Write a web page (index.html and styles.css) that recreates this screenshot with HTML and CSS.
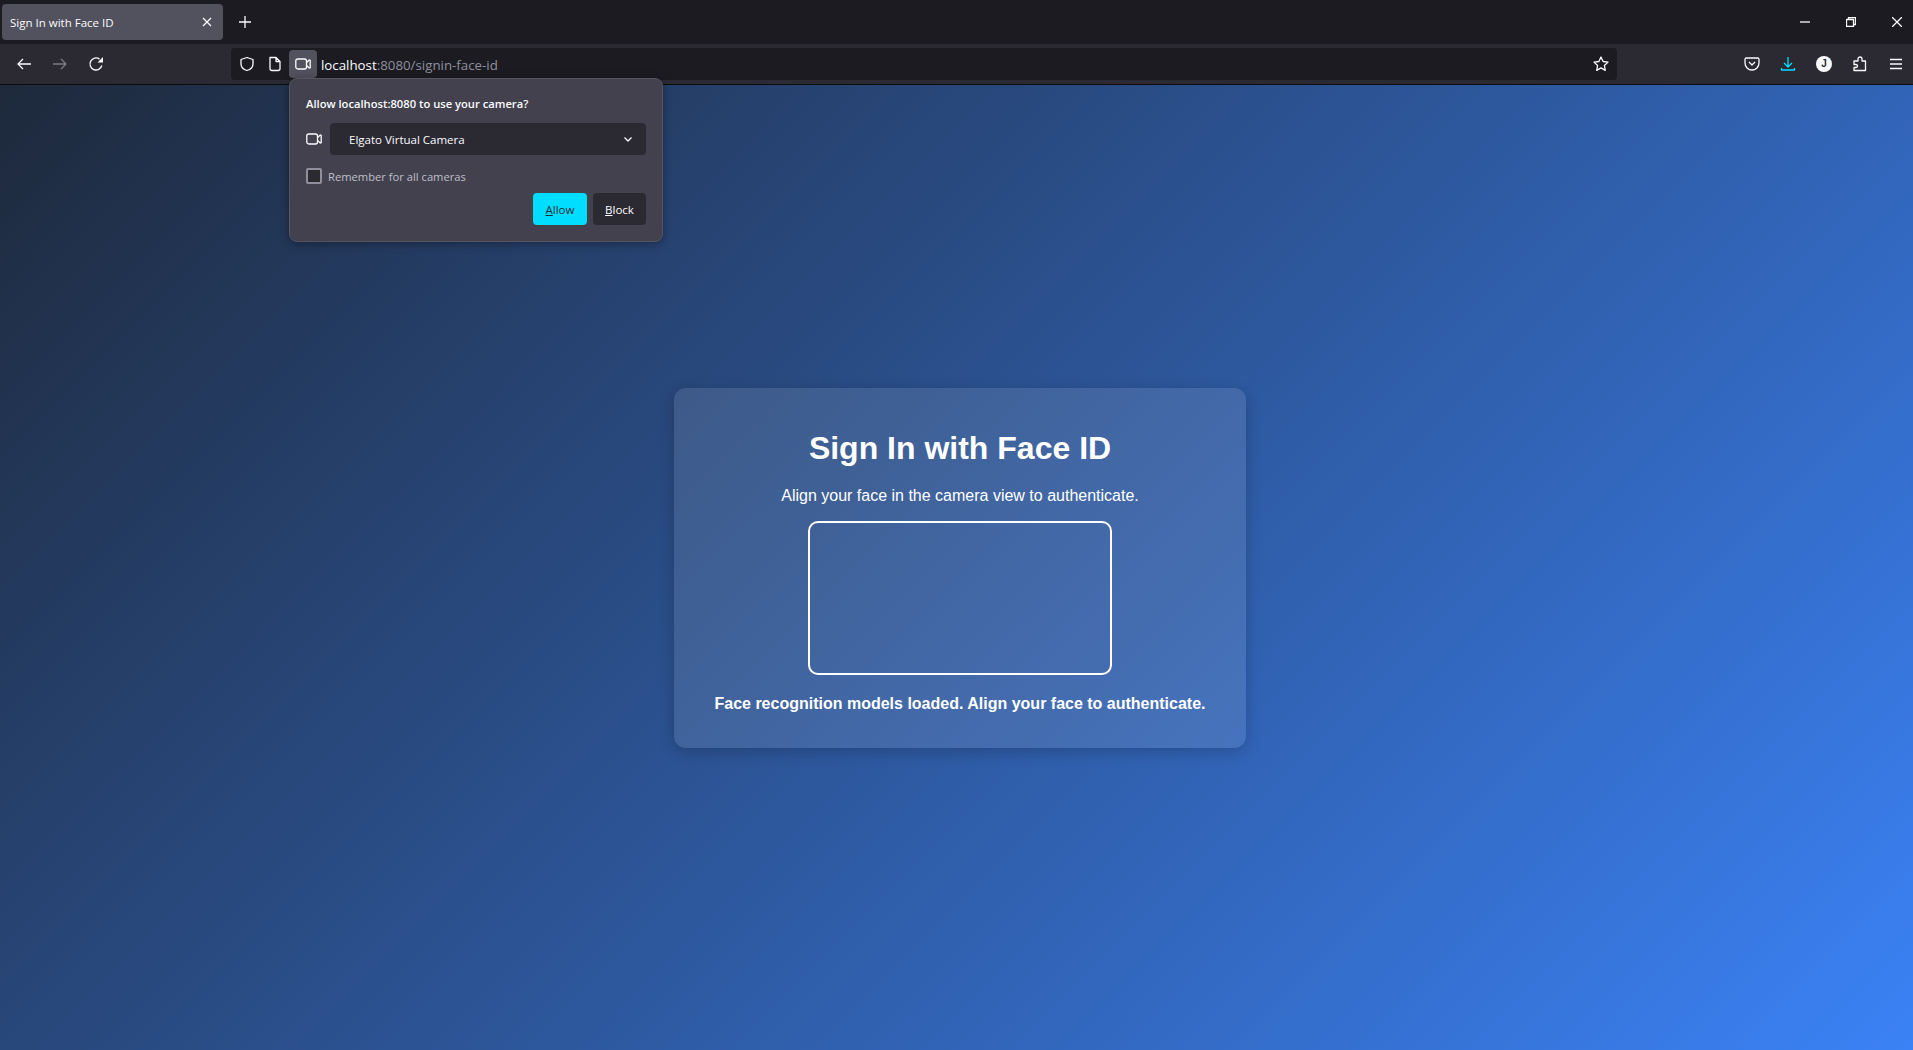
FILE: index.html
```html
<!DOCTYPE html>
<html lang="en">
<head>
  <meta charset="UTF-8" />
  <title>Sign In with Face ID</title>
  <link rel="stylesheet" href="styles.css">
</head>
<body>
  <div class="browser">
    <div class="tabstrip">
      <div class="tab">
        <span class="tab-title">Sign In with Face ID</span>
        <svg class="tab-close" width="10" height="10" viewBox="0 0 10 10"><path d="M1 1l8 8M9 1l-8 8" /></svg>
      </div>
      <svg class="new-tab" width="12" height="12" viewBox="0 0 12 12"><path d="M6 0v12M0 6h12" /></svg>
      <div class="window-controls">
        <svg width="10" height="10" viewBox="0 0 10 10"><path d="M0 5h10" /></svg>
        <svg width="10" height="10" viewBox="0 0 10 10"><path d="M.5 2.5h7v7h-7zM2.500 2.500v-2h7v7h-2" /></svg>
        <svg width="10" height="10" viewBox="0 0 10 10"><path d="M0 0l10 10M10 0L0 10" /></svg>
      </div>
    </div>

    <div class="toolbar">
      <div class="nav-buttons">
        <svg width="16" height="16" viewBox="0 0 16 16"><path d="M15 8H2M7 3L2 8l5 5" /></svg>
        <svg class="disabled" width="16" height="16" viewBox="0 0 16 16"><path d="M1 8h13M9 3l5 5-5 5" /></svg>
        <svg width="16" height="16" viewBox="0 0 16 16"><path d="M13.800 9.500A6 6 0 1 1 11.500 3.100" /><path class="solid" d="M15 1v5.500H9.500z" /></svg>
      </div>
      <div class="urlbar">
        <svg class="url-icon" width="16" height="16" viewBox="0 0 16 16"><path d="M8 1.500l6 2v4.500c0 3-2.500 5.500-6 6.500-3.500-1-6-3.500-6-6.500V3.500z" /></svg>
        <svg class="url-icon" width="16" height="16" viewBox="0 0 16 16"><path d="M3 1.500h6l4 4v7a2 2 0 0 1-2 2H5a2 2 0 0 1-2-2zM9 1.500v4h4" /></svg>
        <div class="camera-anchor">
          <svg width="16" height="16" viewBox="0 0 16 16"><rect x=".8" y="3" width="10.700" height="10" rx="2" /><path d="M11.500 6.500l2.300-2a.7.7 0 0 1 1.400.5v6a.7.7 0 0 1-1.400.5l-2.300-2" /></svg>
        </div>
        <span class="url"><span class="url-host">localhost</span>:8080/signin-face-id</span>
        <svg class="url-star" width="16" height="16" viewBox="0 0 16 16"><path d="M8 1l2.100 4.500 4.900.6-3.600 3.400.9 4.900L8 11.900 3.700 14.400l.9-4.900L1 6.100l4.900-.6z" /></svg>
      </div>
      <div class="toolbar-icons">
        <svg width="16" height="16" viewBox="0 0 16 16"><path d="M2.500 2h11A1.500 1.500 0 0 1 15 3.500V7a7 7 0 0 1-14 0V3.500A1.500 1.500 0 0 1 2.500 2zM5 6l3 3 3-3" /></svg>
        <svg class="download" width="16" height="16" viewBox="0 0 16 16"><path d="M8 1v10M4 7l4 4 4-4M1.500 12v2h13v-2" /></svg>
        <span class="avatar">J</span>
        <svg width="16" height="16" viewBox="0 0 16 16"><path d="M2 5h4V3a2 2 0 0 1 4 0v2h3.500v9.500H2v-3h2a1.500 1.500 0 0 0 0-3H2z" /></svg>
        <svg width="16" height="16" viewBox="0 0 16 16"><path d="M2 3.500h12M2 8h12M2 12.500h12" /></svg>
      </div>
    </div>

    <main class="page">
      <section class="card">
        <h1>Sign In with Face ID</h1>
        <p class="hint">Align your face in the camera view to authenticate.</p>
        <div class="video-box"></div>
        <p class="status">Face recognition models loaded. Align your face to authenticate.</p>
      </section>
    </main>
  </div>

  <div class="popup">
    <div class="popup-title">Allow localhost:8080 to use your camera?</div>
    <div class="popup-row">
      <svg width="16" height="16" viewBox="0 0 16 16"><rect x=".8" y="3" width="10.700" height="10" rx="2" /><path d="M11.500 6.500l2.300-2a.7.7 0 0 1 1.400.5v6a.7.7 0 0 1-1.400.5l-2.300-2" /></svg>
      <div class="camera-select">
        <span>Elgato Virtual Camera</span>
        <svg width="10" height="10" viewBox="0 0 10 10"><path d="M1.500 3.500L5 7l3.500-3.500" /></svg>
      </div>
    </div>
    <label class="remember"><span class="checkbox"></span>Remember for all cameras</label>
    <div class="popup-actions">
      <button class="btn btn-allow"><u>A</u>llow</button>
      <button class="btn btn-block"><u>B</u>lock</button>
    </div>
  </div>
</body>
</html>
```

FILE: styles.css
```css
:root {
  --tab-bg: #1c1b22;
  --toolbar-bg: #2b2a33;
  --popup-bg: #42414d;
  --field-bg: #2b2a33;
  --accent: #00ddff;
}

* {
  box-sizing: border-box;
}

html, body {
  height: 100%;
}

body {
  margin: 0;
  overflow: hidden;
  font-family: "Open Sans", "Noto Sans", sans-serif;
  color: #fbfbfe;
}

svg {
  display: block;
  flex: none;
  fill: none;
  stroke: #fbfbfe;
  stroke-width: 1.3;
  stroke-linejoin: round;
}

.solid {
  fill: #fbfbfe;
  stroke: none;
}

.browser {
  display: flex;
  flex-direction: column;
  height: 100%;
}

/* tabs */
.tabstrip {
  display: flex;
  align-items: center;
  height: 44px;
  padding: 4px 0 4px 2px;
  background: var(--tab-bg);
}

.tab {
  display: flex;
  align-items: center;
  justify-content: space-between;
  width: 221px;
  height: 36px;
  padding: 0 11px 0 8px;
  border-radius: 4px;
  background: #52515e;
  font-size: 11.5px;
}

.new-tab {
  margin-left: 16px;
}

.window-controls {
  display: flex;
  gap: 36px;
  margin-left: auto;
  padding-right: 11px;
}

/* toolbar */
.toolbar {
  display: flex;
  align-items: center;
  height: 41px;
  background: var(--toolbar-bg);
  border-bottom: 1px solid #0c0c0d;
}

.nav-buttons {
  display: flex;
  gap: 20px;
  width: 231px;
  padding-left: 16px;
}

.disabled {
  stroke: #7c7b82;
}

.urlbar {
  display: flex;
  align-items: center;
  width: 1386px;
  height: 32px;
  padding: 0 8px;
  border-radius: 4px;
  background: var(--tab-bg);
}

.url-icon {
  margin-right: 12px;
}

.url-icon + .camera-anchor {
  margin-left: -6px;
}

.camera-anchor {
  display: flex;
  align-items: center;
  justify-content: center;
  width: 28px;
  height: 28px;
  border-radius: 4px;
  background: #52515e;
}

.url {
  margin-left: 4px;
  padding-top: 1px;
  font-size: 13.3px;
  color: #8f8f9d;
}

.url-host {
  color: #fbfbfe;
}

.url-star {
  margin-left: auto;
}

.toolbar-icons {
  display: flex;
  align-items: center;
  gap: 20px;
  margin-left: auto;
  padding-right: 9px;
}

.download {
  stroke: var(--accent);
}

.avatar {
  width: 16px;
  height: 16px;
  border-radius: 50%;
  background: #fbfbfe;
  color: #2b2a33;
  font-family: "Liberation Sans", sans-serif;
  font-size: 10px;
  font-weight: 700;
  line-height: 16px;
  text-align: center;
}

/* page */
.page {
  flex: 1;
  padding: 303px 0 0 7px;
  background: linear-gradient(135deg, #1e293b, #3b82f6);
  font-family: "Liberation Sans", Arial, sans-serif;
}

.card {
  width: 572px;
  margin: 0 auto;
  padding: 40px 32px 35px;
  border-radius: 12px;
  background: rgba(255, 255, 255, 0.1);
  box-shadow: 0 4px 16px rgba(0, 0, 0, 0.2);
  color: #fff;
  text-align: center;
}

.card h1 {
  margin: 0 0 19px;
  font-size: 32px;
  line-height: 40px;
}

.hint {
  margin: 0 0 16px;
  font-size: 16px;
  line-height: 18px;
}

.video-box {
  width: 304px;
  height: 154px;
  margin: 0 auto 20px;
  border: 2px solid #fff;
  border-radius: 10px;
}

.status {
  margin: 0;
  font-size: 16px;
  font-weight: 700;
  line-height: 18px;
}

/* permission popup */
.popup {
  position: absolute;
  top: 78px;
  left: 289px;
  width: 374px;
  height: 164px;
  padding: 17px 16px 16px;
  border: 1px solid #55545f;
  border-radius: 8px;
  background: var(--popup-bg);
  box-shadow: 0 2px 10px rgba(0, 0, 0, 0.35);
  font-size: 11.2px;
}

.popup-title {
  font-weight: 600;
  line-height: 16px;
  margin-bottom: 11px;
}

.popup-row {
  display: flex;
  align-items: center;
  gap: 8px;
}

.camera-select {
  display: flex;
  align-items: center;
  justify-content: space-between;
  flex: 1;
  height: 32px;
  padding: 0 13px 0 19px;
  border-radius: 4px;
  background: var(--field-bg);
  font-size: 11.5px;
}

.remember {
  display: flex;
  align-items: center;
  gap: 6px;
  margin-top: 13px;
  color: #bfbfc9;
}

.checkbox {
  width: 16px;
  height: 16px;
  border: 2px solid #8f8f9d;
  border-radius: 2px;
  background: var(--field-bg);
}

.popup-actions {
  display: flex;
  justify-content: flex-end;
  gap: 6px;
  margin-top: 9px;
}

.btn {
  height: 32px;
  width: 53px;
  padding: 0;
  border: none;
  border-radius: 4px;
  font-family: inherit;
  font-size: 11.5px;
  font-weight: 500;
}

.btn-allow {
  width: 54px;
  background: var(--accent);
  color: #2b2a33;
}

.btn-block {
  background: var(--field-bg);
  color: #fbfbfe;
}
```
